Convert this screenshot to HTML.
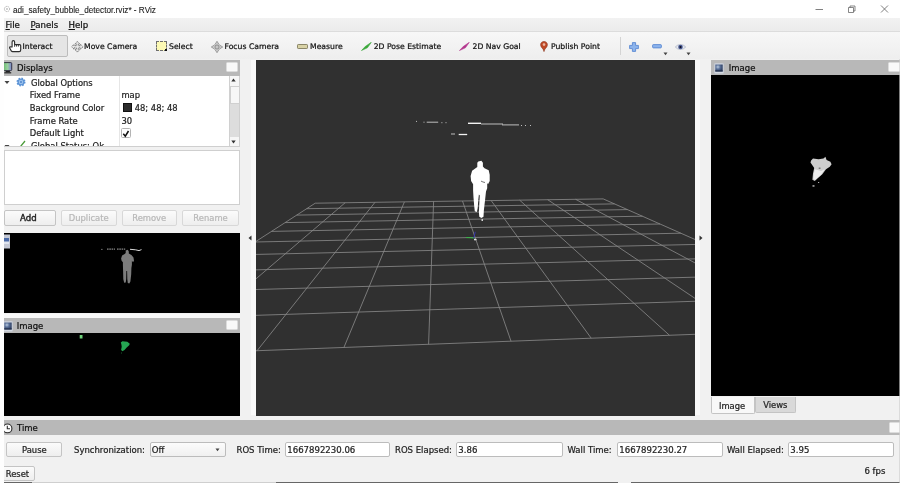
<!DOCTYPE html>
<html><head><meta charset="utf-8"><title>RViz</title>
<style>
html,body{margin:0;padding:0;}
body{width:900px;height:483px;overflow:hidden;position:relative;background:#f1f1f1;font-family:"DejaVu Sans","Liberation Sans",sans-serif;color:#222;font-size:8.4px;-webkit-text-stroke:0.22px currentColor;}
.abs{position:absolute;}
.t{position:absolute;white-space:nowrap;line-height:1;}
#title{left:0;top:0;width:900px;height:18px;background:#fff;}
#title .t{left:13px;top:4.5px;font-family:"Liberation Sans",sans-serif;font-size:9.4px;color:#222;transform:scaleX(0.875);transform-origin:0 0;-webkit-text-stroke:0.120px currentColor;}
#menu{left:0;top:18px;width:900px;height:13px;background:linear-gradient(#f2f2f2,#ebebeb);}
#menu .t{top:3px;font-size:8.6px;color:#111;}
#tool{left:0;top:31px;width:900px;height:28px;background:linear-gradient(#f7f7f7,#eeeeee);border-top:1px solid #dcdcdc;box-sizing:border-box;}
#tool .t{top:11px;font-size:7.7px;color:#111;}
.hdr{background:#b8b8b8;}
.hdr .t{font-size:8.5px;color:#111;top:4px;}
.cb{position:absolute;background:#f9f9f9;border:1px solid #dcdcdc;border-radius:1.5px;box-sizing:border-box;}
.btn{position:absolute;box-sizing:border-box;border:1px solid #c4c4c4;border-radius:2px;background:linear-gradient(#fbfbfb,#eeeeee);text-align:center;font-size:8.4px;line-height:13px;color:#222;}
.btn.dis{color:#b8b8b8;border-color:#d8d8d8;}
.inp{position:absolute;box-sizing:border-box;border:1px solid #bcbcbc;border-radius:2px;background:#fff;height:15.5px;top:441.700px;font-size:8.55px;line-height:15px;padding-left:1.300px;color:#222;}
.lbl{position:absolute;top:446px;font-size:8.5px;line-height:1;white-space:nowrap;color:#222;}
.row{position:absolute;left:0;font-size:8.4px;line-height:1;white-space:nowrap;color:#222;}
.g{display:inline-block;}
#wrap{position:absolute;left:0;top:0;width:900px;height:483px;will-change:transform;}
</style></head><body><div id="wrap">

<div id="title" class="abs">
  <svg class="abs" style="left:3px;top:5px" width="8" height="8" viewBox="0 0 8 8"><circle cx="4" cy="4" r="2.6" fill="none" stroke="#aaa" stroke-width="1" stroke-dasharray="1.2 0.9"/><circle cx="4" cy="4" r="0.9" fill="#bbb"/></svg>
  <div class="t">adi_safety_bubble_detector.rviz* - RViz</div>
  <svg class="abs" style="left:800px;top:0" width="100" height="18" viewBox="0 0 100 18">
    <path d="M15.5 9.5h7.5" stroke="#555" stroke-width="0.75" fill="none"/>
    <path d="M48.5 7.5h5v5h-5z M50 7.5v-1.5h5v5h-1.5" stroke="#555" stroke-width="0.7" fill="none"/>
    <path d="M81 5.5l7 7M88 5.5l-7 7" stroke="#555" stroke-width="0.75" fill="none"/>
  </svg>
</div>

<div id="menu" class="abs">
  <div class="t" style="left:5.500px"><u>F</u>ile</div>
  <div class="t" style="left:30.500px"><u>P</u>anels</div>
  <div class="t" style="left:68.500px"><u>H</u>elp</div>
</div>

<div id="tool" class="abs">
  <div class="abs" style="left:7.300px;top:3.300px;width:60.700px;height:21.500px;border:1px solid #bcbcbc;border-radius:2px;background:#e5e5e5;box-sizing:border-box"></div>
  <!-- interact hand -->
  <svg class="abs" style="left:9px;top:8px" width="13" height="13" viewBox="0 0 13 13"><path d="M3.1 7V1.900a1.250 1.250 0 0 1 2.500 0V4.600h5a1.100 1.100 0 0 1 1.100 1.100V10a1.600 1.600 0 0 1-1.600 1.600H3.600a1.600 1.600 0 0 1-1.300-.7L.8 8.300a1 1 0 0 1 .3-1.500z" fill="#fff" stroke="#2e2e2e" stroke-width="1.150" stroke-linejoin="round"/><path d="M5.600 4.600v2.200M7.500 4.800v1.800M9.400 4.800v1.800" stroke="#2e2e2e" stroke-width="0.900" fill="none"/></svg>
  <div class="t" style="left:22.5px">Interact</div>
  <!-- move camera -->
  <svg class="abs" style="left:70.500px;top:8.500px" width="13" height="12" viewBox="0 0 13 12"><path d="M6.300 0.500L8.600 2.900H7.300V4.700H9.600V3.400L12 5.800 9.600 8.200V6.900H7.300V8.700H8.600L6.300 11.100 4 8.700H5.300V6.900H3V8.200L0.600 5.800 3 3.400V4.700H5.300V2.900H4z" fill="#e9e9e9" stroke="#6a6a6a" stroke-width="0.900" stroke-dasharray="1.600 0.700"/></svg>
  <div class="t" style="left:84px">Move Camera</div>
  <!-- select -->
  <div class="abs" style="left:155.800px;top:9.200px;width:11.200px;height:9.800px;background:#fcf9b4;border:1px dashed #6e6e6e;box-sizing:border-box"></div><div class="abs" style="left:165px;top:17px;width:2px;height:2px;background:#111"></div>
  <div class="t" style="left:169px">Select</div>
  <!-- focus camera -->
  <svg class="abs" style="left:210.800px;top:8.500px" width="12" height="12" viewBox="0 0 12 12"><path d="M6 0.300L7.800 3.200A3.300 3.300 0 0 1 8.800 4.200L11.700 6 8.800 7.800A3.300 3.300 0 0 1 7.800 8.800L6 11.700 4.200 8.800A3.300 3.300 0 0 1 3.200 7.800L0.300 6 3.200 4.200A3.300 3.300 0 0 1 4.200 3.200z" fill="#cfcfcf" stroke="#8c8c8c" stroke-width="0.800"/><circle cx="6" cy="6" r="2" fill="#e8e8e8" stroke="#7c7c7c" stroke-width="0.900"/><circle cx="6" cy="6" r="0.700" fill="#8a8a8a"/></svg>
  <div class="t" style="left:224.500px">Focus Camera</div>
  <!-- measure -->
  <div class="abs" style="left:296.800px;top:12px;width:11.700px;height:5px;background:#d8d2a6;border:1px solid #8a8668;box-sizing:border-box;border-radius:1.200px"></div>
  <div class="t" style="left:310px">Measure</div>
  <!-- 2d pose -->
  <svg class="abs" style="left:360.500px;top:10px" width="11" height="9" viewBox="0 0 11 9"><path d="M0.500 8.500L4.200 4.600 10.300 0.300 6.400 5.800z" fill="#3aa83a" stroke="#3aa83a" stroke-width="0.600" stroke-linejoin="round"/></svg>
  <div class="t" style="left:373.700px">2D Pose Estimate</div>
  <!-- 2d nav -->
  <svg class="abs" style="left:459.300px;top:9.700px" width="11" height="9" viewBox="0 0 11 9"><path d="M0.500 8.500L4.200 4.600 10.300 0.300 6.400 5.800z" fill="#b4388f" stroke="#b4388f" stroke-width="0.600" stroke-linejoin="round"/></svg>
  <div class="t" style="left:472.500px">2D Nav Goal</div>
  <!-- publish point -->
  <svg class="abs" style="left:540.200px;top:8.800px" width="8" height="11" viewBox="0 0 8 11"><path d="M4 10.600C4 8 0.600 6.600 0.600 3.700 0.600 1.800 2.100 0.500 4 0.500S7.400 1.800 7.400 3.700C7.400 6.600 4 8 4 10.600z" fill="#bf4a28" stroke="#8a3018" stroke-width="0.600"/><circle cx="4" cy="3.600" r="1.300" fill="#eab9a4"/></svg>
  <div class="t" style="left:551px">Publish Point</div>
  <div class="abs" style="left:620px;top:5px;width:1px;height:18px;background:#d4d4d4"></div>
  <!-- plus -->
  <svg class="abs" style="left:628.800px;top:9.600px" width="10" height="10" viewBox="0 0 10 10"><path d="M3.400 0.600h3.200v2.800h2.800v3.200h-2.800v2.800h-3.200v-2.800h-2.800v-3.200h2.800z" fill="#8db4ec" stroke="#4f80cf" stroke-width="0.800" stroke-linejoin="round"/></svg>
  <!-- minus -->
  <svg class="abs" style="left:652.300px;top:12.300px" width="10" height="5" viewBox="0 0 10 5"><rect x="0.600" y="0.600" width="8.800" height="3.300" rx="0.800" fill="#8db4ec" stroke="#4f80cf" stroke-width="0.800"/></svg>
  <svg class="abs" style="left:663px;top:20px" width="5" height="4" viewBox="0 0 5 4"><path d="M0.500 0.500h4l-2 2.800z" fill="#444"/></svg>
  <!-- eye -->
  <svg class="abs" style="left:675px;top:10.500px" width="11" height="8" viewBox="0 0 11 8"><path d="M0.400 4C2.400 0.800 8.600 0.800 10.600 4 8.600 7.200 2.400 7.200 0.400 4z" fill="#e3e6ee" stroke="#a0a8ba" stroke-width="0.600"/><circle cx="5.500" cy="4" r="2.300" fill="#4a5a94"/><circle cx="5.500" cy="4" r="1" fill="#0a0a18"/></svg>
  <svg class="abs" style="left:686px;top:20px" width="5" height="4" viewBox="0 0 5 4"><path d="M0.500 0.500h4l-2 2.800z" fill="#444"/></svg>
</div>

<!-- right edge strip -->
<div class="abs" style="left:898.600px;top:59px;width:1.400px;height:424px;background:rgba(205,205,205,0.620);z-index:6"></div>
<!-- left white margin -->
<div class="abs" style="left:0;top:18px;width:3.600px;height:465px;background:#fefefe;z-index:5"></div>

<!-- Displays panel -->
<div class="abs hdr" style="left:4px;top:60px;width:235.500px;height:15.5px;z-index:2">
  <svg class="abs" style="left:-0.700px;top:2px" width="9.500" height="12" viewBox="0 0 11 12" preserveAspectRatio="none"><defs><linearGradient id="tv" x1="0" x2="1"><stop offset="0" stop-color="#6fbf73"/><stop offset="0.500" stop-color="#9ad0a0"/><stop offset="1" stop-color="#7d7fd0"/></linearGradient></defs><rect x="0.600" y="0.600" width="9.500" height="8" rx="1" fill="url(#tv)" stroke="#2b2b3a" stroke-width="1"/><rect x="3" y="9" width="5" height="1.200" fill="#222"/><rect x="1.500" y="10.200" width="8" height="1.200" fill="#222"/></svg>
  <div class="t" style="left:13px">Displays</div>
  <div class="cb" style="left:222.300px;top:1.800px;width:11.500px;height:10.300px"></div>
</div>
<div class="abs" style="left:4px;top:75px;width:235.500px;height:72px;background:#fff;overflow:hidden">
  <div class="abs" style="left:115px;top:0;width:1px;height:72px;background:#e6e6e6"></div>
  <svg class="abs" style="left:-0.300px;top:5px" width="6" height="5" viewBox="0 0 6 5"><path d="M0.500 1h5l-2.500 3z" fill="#444"/></svg>
  <svg class="abs" style="left:12px;top:2px" width="10" height="10" viewBox="0 0 10 10"><circle cx="5" cy="5" r="3.600" fill="#5b93d6" stroke="#5b93d6" stroke-width="1.800" stroke-dasharray="1.500 1.330"/><circle cx="5" cy="5" r="2.300" fill="#9cc1ec"/><circle cx="5" cy="5" r="1" fill="#4f86cc"/></svg>
  <div class="row" style="left:27px;top:4px">Global Options</div>
  <div class="row" style="left:25.700px;top:15.800px">Fixed Frame</div>
  <div class="row" style="left:117.400px;top:15.800px">map</div>
  <div class="row" style="left:25.700px;top:28.600px">Background Color</div>
  <div class="abs" style="left:119.300px;top:28px;width:8.500px;height:9px;background:#2c2c2c;border:0.500px solid #111;box-sizing:border-box"></div>
  <div class="row" style="left:130.700px;top:28.600px">48; 48; 48</div>
  <div class="row" style="left:25.700px;top:42.400px">Frame Rate</div>
  <div class="row" style="left:117.400px;top:42.400px">30</div>
  <div class="row" style="left:25.700px;top:54px">Default Light</div>
  <div class="abs" style="left:117.200px;top:53.300px;width:9.600px;height:9.800px;border:1px solid #b4b4b4;border-radius:1.500px;box-sizing:border-box;background:#fff"></div>
  <svg class="abs" style="left:118.400px;top:54.500px" width="8" height="8" viewBox="0 0 8 8"><path d="M1.300 3.800l2 2.400L6.500 1" fill="none" stroke="#111" stroke-width="1.500"/></svg>
  <svg class="abs" style="left:-0.300px;top:68.500px" width="6" height="5" viewBox="0 0 6 5"><path d="M0.500 1h5l-2.500 3z" fill="#444"/></svg>
  <svg class="abs" style="left:10.500px;top:65px" width="11" height="10" viewBox="0 0 11 10"><path d="M1 6.500l2.500 2.500L10 1" fill="none" stroke="#4b9b3a" stroke-width="1.300"/></svg>
  <div class="row" style="left:27px;top:67px">Global Status: Ok</div>
  <!-- scrollbar -->
  <div class="abs" style="left:225px;top:0;width:10.500px;height:72px;background:#dddddd;border-left:1px solid #d0d0d0;box-sizing:border-box"></div>
  <div class="abs" style="left:226px;top:0;width:9.500px;height:10.500px;background:#f6f6f6"></div>
  <div class="abs" style="left:226px;top:10.500px;width:9.500px;height:18.500px;background:#f7f7f7;border:1px solid #d0d0d0;box-sizing:border-box"></div>
  <div class="abs" style="left:226px;top:61.500px;width:9.500px;height:10.500px;background:#f6f6f6"></div>
  <svg class="abs" style="left:227.300px;top:3.300px" width="5" height="4" viewBox="0 0 5 4"><path d="M0.300 3.500h4.400l-2.200-3z" fill="#333"/></svg>
  <svg class="abs" style="left:227.300px;top:64.800px" width="5" height="4" viewBox="0 0 5 4"><path d="M0.300 0.500h4.400l-2.200 3z" fill="#333"/></svg>
  <div class="abs" style="left:0;top:71.300px;width:236px;height:0.700px;background:#cfcfcf"></div>
  <div class="abs" style="left:234.800px;top:0;width:0.700px;height:72px;background:#cfcfcf"></div>
</div>
<!-- description box -->
<div class="abs" style="left:4px;top:150px;width:235.500px;height:55.300px;background:#fff;border:1px solid #cfcfcf;box-sizing:border-box"></div>
<!-- buttons -->
<div class="btn" style="left:4px;top:210px;width:51.700px;height:15.500px;line-height:14.500px;padding-right:3px;-webkit-text-stroke:0.400px currentColor;font-size:8.600px"><span class="g">Add</span></div>
<div class="btn dis" style="left:60.700px;top:210px;width:56px;height:15.500px;line-height:14.500px"><span class="g">Duplicate</span></div>
<div class="btn dis" style="left:121.700px;top:210px;width:55px;height:15.500px;line-height:14.500px"><span class="g">Remove</span></div>
<div class="btn dis" style="left:182.300px;top:210px;width:56.500px;height:15.500px;line-height:14.500px"><span class="g">Rename</span></div>

<!-- image panel 1 -->
<div class="abs" style="left:4px;top:233px;width:235.500px;height:80.400px;background:#000">
  <svg class="abs" style="left:0;top:0" width="236" height="80" viewBox="0 0 236 80">
    <rect x="0" y="1.500" width="6" height="14" fill="#c4c8d4"/><rect x="0" y="5" width="5" height="6" fill="#4a6aa8"/><rect x="0" y="8.500" width="5" height="2.500" fill="#dfe4ee"/>
    <g stroke="#d8d8d8" stroke-width="0.800" fill="none" stroke-dasharray="1.600 0.700"><path d="M97.400 16.400h1M103 16.100h8M113 16.100h8.200"/></g><path d="M126 16.300l5.500 .5 3.500 .8 2.500-1" stroke="#f4f4f4" stroke-width="0.900" fill="none"/>
    <path d="M121.7 17.4 L123.8 16.8 L124.8 18.4 L124.8 20.5 L127.4 22.0 L129.5 24.6 L130.0 27.7 L129.0 29.3 L127.9 27.7 L127.9 31.8 L127.4 35.0 L127.2 41.2 L126.4 48.4 L125.3 50.5 L123.8 50.0 L123.3 46.3 L123.1 38.1 L122.4 38.1 L122.2 46.3 L121.7 49.4 L120.2 49.7 L119.3 46.3 L119.1 38.1 L118.9 31.8 L118.9 29.3 L117.6 27.7 L117.1 25.6 L118.1 22.5 L120.7 21.0 L121.7 19.9Z" fill="#7c7c7c"/>
  </svg>
</div>
<div class="abs" style="left:4px;top:313.500px;width:235.500px;height:4.700px;background:#f8f8f8"></div>
<!-- image panel 2 -->
<div class="abs hdr" style="left:4px;top:318.300px;width:235.500px;height:15.200px;">
  <svg class="abs" style="left:-1px;top:2.300px" width="10" height="11" viewBox="0 0 10 11"><rect x="0.300" y="0.300" width="9.400" height="10.200" rx="1.200" fill="#d4d9e2" stroke="#bfc4ce" stroke-width="0.500"/><rect x="1.300" y="1.500" width="7.400" height="7" fill="url(#ig)"/><rect x="1.300" y="7.300" width="7.400" height="1.200" fill="#27344f"/></svg>
  <div class="t" style="left:12.700px;top:4px">Image</div>
  <div class="cb" style="left:222.300px;top:1.800px;width:11.500px;height:10.300px"></div>
</div>
<div class="abs" style="left:4px;top:333px;width:235.500px;height:82.600px;background:#000">
  <svg class="abs" style="left:0;top:0" width="236" height="82" viewBox="0 0 236 82">
    <rect x="75.700" y="2" width="2.800" height="3.500" fill="#6ed27a"/>
    <path d="M116.8 9.4 L118.4 8.2 L120.8 8.5 L123.3 8.8 L125.8 10.7 L125.2 12.2 L122.7 14.4 L120.5 16.9 L118.4 18.2 L117.1 16.9 L117.7 13.8 L117.4 11.6Z" fill="#25a552"/><rect x="117" y="19.500" width="1" height="1" fill="#1a5a30"/>
  </svg>
</div>

<!-- splitter handles -->
<div class="abs" style="left:251px;top:60px;width:5px;height:355px;background:#f9f9f9"></div>
<svg class="abs" style="left:247.500px;top:234.500px" width="4" height="6" viewBox="0 0 4 6"><path d="M3.500 0.500v5l-3-2.500z" fill="#333"/></svg>
<div class="abs" style="left:695px;top:60px;width:5px;height:355px;background:#f9f9f9"></div>
<svg class="abs" style="left:698.500px;top:234.500px" width="4" height="6" viewBox="0 0 4 6"><path d="M0.500 0.500v5l3-2.500z" fill="#333"/></svg>

<!-- 3D view -->
<div class="abs" style="left:256px;top:60px;width:439px;height:355.600px;background:#303030;overflow:hidden">
  <svg class="abs" style="left:0;top:0" width="439" height="355" viewBox="0 0 439 355">
    <g stroke="#868686" stroke-width="0.850" fill="none"><line x1="59.2" y1="143.2" x2="-180.0" y2="297.5"/><line x1="89.2" y1="142.7" x2="-88.2" y2="294.1"/><line x1="119.0" y1="142.3" x2="1.1" y2="290.7"/><line x1="148.4" y1="141.9" x2="87.9" y2="287.5"/><line x1="177.6" y1="141.4" x2="172.6" y2="284.3"/><line x1="206.5" y1="141.0" x2="255.0" y2="281.2"/><line x1="235.2" y1="140.6" x2="335.2" y2="278.2"/><line x1="263.6" y1="140.1" x2="413.5" y2="275.3"/><line x1="291.7" y1="139.7" x2="489.8" y2="272.4"/><line x1="319.6" y1="139.3" x2="564.2" y2="269.6"/><line x1="347.2" y1="138.9" x2="636.8" y2="266.9"/><line x1="59.2" y1="143.2" x2="347.2" y2="138.9"/><line x1="50.6" y1="148.7" x2="358.5" y2="143.9"/><line x1="40.7" y1="155.1" x2="371.5" y2="149.6"/><line x1="29.1" y1="162.6" x2="386.5" y2="156.2"/><line x1="15.5" y1="171.4" x2="404.0" y2="164.0"/><line x1="-0.9" y1="182.0" x2="424.8" y2="173.2"/><line x1="-20.9" y1="194.9" x2="449.8" y2="184.2"/><line x1="-45.9" y1="211.0" x2="480.5" y2="197.8"/><line x1="-77.9" y1="231.7" x2="519.2" y2="214.9"/><line x1="-120.5" y1="259.2" x2="569.3" y2="237.1"/><line x1="-180.0" y1="297.5" x2="636.8" y2="266.9"/></g>
    <g stroke="#e2e2e2" fill="none" stroke-width="0.800">
      <path d="M160 61.400h1M167.500 62.200h1M170.700 62.200h11.500M185.400 62.700h1M189.500 62.700h1"/>
      <path d="M212 63.300h13" stroke-width="1.400" stroke="#f2f2f2"/>
      <path d="M225 64h22M246 64.900h17M265 65.500h1M269 65.500h1M274 65.500h1"/>
      <path d="M195 74h4" />
      <path d="M202.700 74.500h8.500" stroke-width="1.300" stroke="#f2f2f2"/>
    </g>
    <path d="M222.3 101.4 L225.4 100.8 L226.9 102.8 L226.9 106.6 L228.5 108.2 L232.7 110.3 L233.7 114.8 L233.7 121.1 L232.0 124.2 L231.2 123.1 L231.2 128.3 L230.0 131.4 L229.1 139.7 L227.9 150.0 L227.5 156.7 L225.4 157.9 L223.3 156.7 L222.9 152.1 L223.3 143.8 L223.8 135.5 L222.9 134.5 L222.3 139.7 L221.7 148.0 L220.9 152.1 L218.8 151.3 L218.2 145.9 L217.5 137.6 L217.1 130.4 L217.1 124.2 L215.1 121.1 L214.6 115.9 L216.1 110.7 L219.2 108.6 L221.3 107.0 L221.3 102.8Z" fill="#fff"/>
    <rect x="225.500" y="159.300" width="1.500" height="1.500" fill="#fff"/>
    <path d="M210 177.500l8.500 .5" stroke="#2fbf3f" stroke-width="0.900"/>
    <path d="M217.800 178l1.500-6.200" stroke="#3030b8" stroke-width="0.900"/><path d="M225 121.100l2 .9 2 .5" stroke="#666" stroke-width="0.900" fill="none"/>
    <rect x="218" y="178.800" width="2.500" height="1.500" fill="#ddd"/>
  </svg>
</div>

<!-- right image panel -->
<div class="abs hdr" style="left:711px;top:60px;width:189px;height:15.300px;">
  <svg class="abs" style="left:3.300px;top:2.600px" width="10" height="11" viewBox="0 0 10 11"><defs><radialGradient id="ig" cx="0.35" cy="0.35" r="0.7"><stop offset="0" stop-color="#b9cbe0"/><stop offset="0.450" stop-color="#5a7098"/><stop offset="1" stop-color="#2c3c5e"/></radialGradient></defs><rect x="0.300" y="0.300" width="9.400" height="10.200" rx="1.200" fill="#d4d9e2" stroke="#bfc4ce" stroke-width="0.500"/><rect x="1.300" y="1.500" width="7.400" height="7" fill="url(#ig)"/><rect x="1.300" y="7.300" width="7.400" height="1.200" fill="#27344f"/></svg>
  <div class="t" style="left:17.800px">Image</div>
  <div class="cb" style="left:177px;top:2px;width:13px;height:10px"></div>
</div>
<div class="abs" style="left:711px;top:75px;width:189px;height:321px;background:#000">
  <svg class="abs" style="left:0;top:0" width="189" height="321" viewBox="0 0 189 321">
    <path d="M100.1 85.5 L102.0 83.6 L107.6 84.3 L112.5 83.6 L114.4 81.8 L115.6 84.9 L119.4 86.7 L120.6 89.2 L118.8 91.7 L115.0 94.2 L111.3 99.2 L107.0 102.9 L103.8 106.0 L101.4 104.8 L102.0 98.5 L103.2 93.0 L100.7 89.2 L99.5 87.4Z" fill="#cdcdcd"/><path d="M103.8 94.2 L110.1 96.1 L113.8 94.2 L110.1 99.8 L106.3 102.9 L103.8 105.0 L102.4 103.8 L102.9 98.5Z" fill="#ececec"/><rect x="107.700" y="92.500" width="1.800" height="1.500" fill="#777"/><rect x="101.500" y="110.300" width="2" height="1.300" fill="#ccc"/><rect x="107" y="107" width="1.200" height="1" fill="#aaa"/>
  </svg>
</div>
<!-- tabs -->
<div class="abs" style="left:711px;top:396.500px;width:43.700px;height:17.500px;padding-right:1.500px;background:#f8f8f8;border:1px solid #c4c4c4;border-top:none;box-sizing:border-box;border-radius:0 0 2px 2px;font-size:8.400px;line-height:19px;text-align:center"><span class="g">Image</span></div>
<div class="abs" style="left:754.700px;top:396.500px;width:41.300px;height:16.300px;background:#d9d9d9;border:1px solid #c4c4c4;border-top:none;box-sizing:border-box;border-radius:0 0 2px 2px;font-size:8.400px;line-height:17.500px;text-align:center"><span class="g">Views</span></div>

<!-- Time panel -->
<div class="abs hdr" style="left:4px;top:420.200px;width:896px;height:14.800px;">
  <svg class="abs" style="left:-2px;top:3px" width="11" height="11" viewBox="0 0 11 11"><circle cx="5.500" cy="5.400" r="4.400" fill="#fdfdfd" stroke="#2c2c2c" stroke-width="1.100"/><path d="M5.300 2.800V5.700H8" fill="none" stroke="#2c2c2c" stroke-width="1.100"/></svg>
  <div class="t" style="left:13px">Time</div>
  <div class="cb" style="left:884.500px;top:2px;width:13px;height:11px"></div>
</div>
<div class="btn" style="left:6.300px;top:441.700px;width:56.200px;height:15.300px;line-height:14.500px"><span class="g">Pause</span></div>
<div class="lbl" style="left:74px">Synchronization:</div>
<div class="inp" style="left:149.500px;width:76px;background:linear-gradient(#fcfcfc,#f0f0f0)"><span class="g">Off</span></div>
<svg class="abs" style="left:214.500px;top:447.500px" width="5" height="4" viewBox="0 0 5 4"><path d="M0.500 0.500h4l-2 2.800z" fill="#444"/></svg>
<div class="lbl" style="left:236.500px">ROS Time:</div>
<div class="inp" style="left:285px;width:105px"><span class="g">1667892230.06</span></div>
<div class="lbl" style="left:395px">ROS Elapsed:</div>
<div class="inp" style="left:456px;width:106.500px"><span class="g">3.86</span></div>
<div class="lbl" style="left:567.500px">Wall Time:</div>
<div class="inp" style="left:617px;width:105.500px"><span class="g">1667892230.27</span></div>
<div class="lbl" style="left:727px">Wall Elapsed:</div>
<div class="inp" style="left:788px;width:106px"><span class="g">3.95</span></div>
<div class="btn" style="left:1px;top:466.300px;width:34.300px;height:15px;line-height:15px;padding-right:1.500px"><span class="g">Reset</span></div><div class="abs" style="left:4px;top:481.800px;width:28px;height:1.200px;background:#666"></div><div class="abs" style="left:32px;top:482px;width:244px;height:1px;background:#cfcfcf"></div><div class="abs" style="left:276px;top:481.800px;width:341.500px;height:1.200px;background:#666"></div><div class="abs" style="left:631px;top:481.800px;width:269px;height:1.200px;background:#666"></div>
<div class="lbl" style="left:864.500px;top:466.500px">6 fps</div>
</div></body></html>
